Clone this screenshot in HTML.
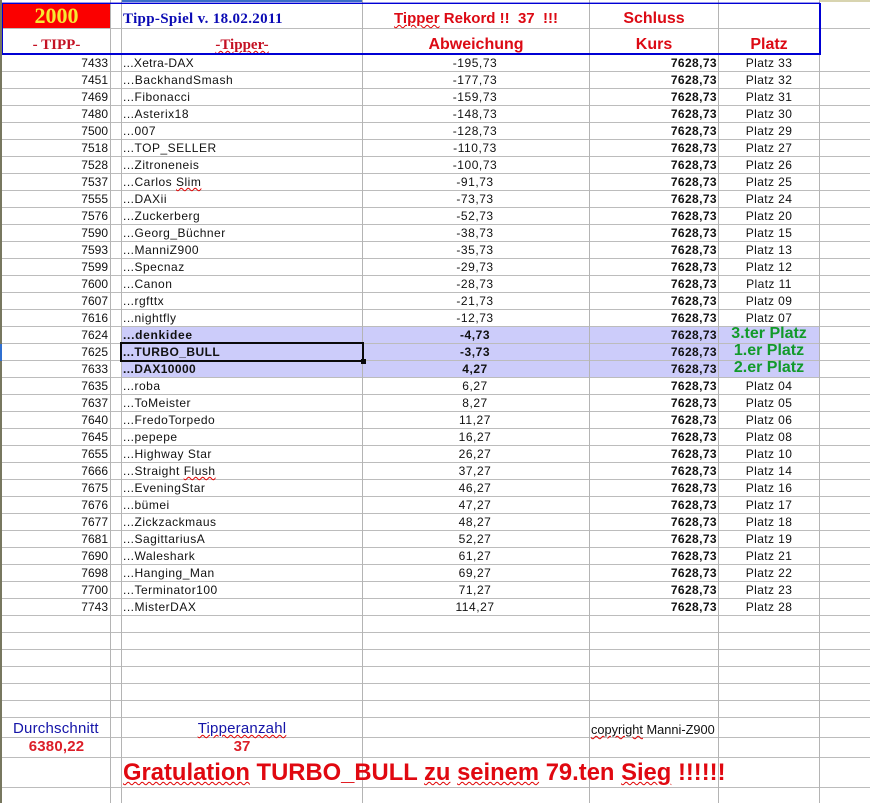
<!DOCTYPE html>
<html><head><meta charset="utf-8">
<style>
html,body{margin:0;padding:0;background:#fff}
#p{position:relative;width:870px;height:803px;overflow:hidden;background:#fff;font-family:"Liberation Sans",sans-serif;font-size:12px;color:#111}
.a{position:absolute;white-space:pre}
.h{position:absolute;left:2px;width:868px;height:1px;background:#bcbcbc}
.v{position:absolute;top:0;width:1px;height:803px;background:#b4b4b4}
.rows{position:absolute;left:0;top:55px;width:820px}
.r{position:relative;height:17px;line-height:17px}
.r span{position:absolute;top:0;white-space:pre}
.r span span{position:static}
.r .n{left:60px;width:48px;text-align:right}
.r .t{left:123px;letter-spacing:.5px}
.r .d{left:362px;width:226px;text-align:center;letter-spacing:.55px}
.r .k{left:640px;width:77px;text-align:right;font-weight:bold;letter-spacing:.4px}
.r .p{left:719px;width:100px;text-align:center;letter-spacing:.4px}
.b .t,.b .d{font-weight:bold}
.r .g{font-weight:bold;font-size:16px;color:#129a2a;top:-2px;letter-spacing:0}
.w{text-decoration:underline wavy #e00000 1px;text-underline-offset:1px}
.red{color:#dc0a14}
.ser{font-family:"Liberation Serif",serif;font-weight:bold}
.hd{font-weight:bold;color:#dc0a14;text-align:center;line-height:18px}
</style></head><body><div id="p">

<div class="a" style="left:121px;top:0;width:241px;height:2px;background:#3a6cc8"></div>
<div class="a" style="left:819px;top:0;width:51px;height:2px;background:#d8d4b0"></div>
<div class="a" style="left:0;top:0;width:2px;height:803px;background:#77775f"></div>
<div class="a" style="left:0;top:344px;width:2px;height:17px;background:#2f6fd0"></div>

<div class="a" style="left:121px;top:327px;width:698px;height:51px;background:#ccccfa"></div>

<div class="h" style="top:28px"></div>
<div class="h" style="top:71px"></div><div class="h" style="top:88px"></div><div class="h" style="top:105px"></div><div class="h" style="top:122px"></div><div class="h" style="top:139px"></div><div class="h" style="top:156px"></div><div class="h" style="top:173px"></div><div class="h" style="top:190px"></div><div class="h" style="top:207px"></div><div class="h" style="top:224px"></div><div class="h" style="top:241px"></div><div class="h" style="top:258px"></div><div class="h" style="top:275px"></div><div class="h" style="top:292px"></div><div class="h" style="top:309px"></div><div class="h" style="top:326px"></div><div class="h" style="top:343px"></div><div class="h" style="top:360px"></div><div class="h" style="top:377px"></div><div class="h" style="top:394px"></div><div class="h" style="top:411px"></div><div class="h" style="top:428px"></div><div class="h" style="top:445px"></div><div class="h" style="top:462px"></div><div class="h" style="top:479px"></div><div class="h" style="top:496px"></div><div class="h" style="top:513px"></div><div class="h" style="top:530px"></div><div class="h" style="top:547px"></div><div class="h" style="top:564px"></div><div class="h" style="top:581px"></div><div class="h" style="top:598px"></div><div class="h" style="top:615px"></div><div class="h" style="top:632px"></div><div class="h" style="top:649px"></div><div class="h" style="top:666px"></div><div class="h" style="top:683px"></div><div class="h" style="top:700px"></div><div class="h" style="top:717px"></div><div class="h" style="top:737px"></div><div class="h" style="top:757px"></div><div class="h" style="top:787px"></div>

<div class="v" style="left:110px"></div>
<div class="v" style="left:121px"></div>
<div class="v" style="left:362px"></div>
<div class="v" style="left:589px"></div>
<div class="v" style="left:718px"></div>
<div class="v" style="left:819px"></div>

<div class="a" style="left:3px;top:4px;width:107px;height:24px;background:#fb0000"></div>
<div class="a ser" style="left:3px;top:4px;width:107px;height:24px;line-height:24px;text-align:center;font-size:22px;color:#f6e832">2000</div>
<div class="a ser" style="left:123px;top:11px;line-height:17px;font-size:15px;color:#0a0ab4;letter-spacing:.33px">Tipp-Spiel v. 18.02.2011</div>
<div class="a hd" style="left:363px;top:10px;width:226px;font-size:15px"><span class="w">Tipper</span> Rekord !!  37  !!!</div>
<div class="a hd" style="left:590px;top:10px;width:128px;font-size:16px">Schluss</div>
<div class="a ser" style="left:3px;top:37px;width:107px;text-align:center;line-height:17px;font-size:15px;color:#c41224">- TIPP-</div>
<div class="a ser" style="left:122px;top:37px;width:240px;text-align:center;line-height:17px;font-size:15px;color:#c41224"><span class="w">-Tipper-</span></div>
<div class="a hd" style="left:363px;top:36px;width:226px;font-size:16px">Abweichung</div>
<div class="a hd" style="left:590px;top:36px;width:128px;font-size:16px">Kurs</div>
<div class="a hd" style="left:719px;top:36px;width:100px;font-size:16px">Platz</div>

<div class="rows">
<div class="r"><span class="n">7433</span><span class="t" style="letter-spacing:.3px">...Xetra-DAX</span><span class="d">-195,73</span><span class="k">7628,73</span><span class="p">Platz 33</span></div>
<div class="r"><span class="n">7451</span><span class="t" style="letter-spacing:.6px">...BackhandSmash</span><span class="d">-177,73</span><span class="k">7628,73</span><span class="p">Platz 32</span></div>
<div class="r"><span class="n">7469</span><span class="t">...Fibonacci</span><span class="d">-159,73</span><span class="k">7628,73</span><span class="p">Platz 31</span></div>
<div class="r"><span class="n">7480</span><span class="t">...Asterix18</span><span class="d">-148,73</span><span class="k">7628,73</span><span class="p">Platz 30</span></div>
<div class="r"><span class="n">7500</span><span class="t">...007</span><span class="d">-128,73</span><span class="k">7628,73</span><span class="p">Platz 29</span></div>
<div class="r"><span class="n">7518</span><span class="t">...TOP_SELLER</span><span class="d">-110,73</span><span class="k">7628,73</span><span class="p">Platz 27</span></div>
<div class="r"><span class="n">7528</span><span class="t">...Zitroneneis</span><span class="d">-100,73</span><span class="k">7628,73</span><span class="p">Platz 26</span></div>
<div class="r"><span class="n">7537</span><span class="t">...Carlos <span class="w">Slim</span></span><span class="d">-91,73</span><span class="k">7628,73</span><span class="p">Platz 25</span></div>
<div class="r"><span class="n">7555</span><span class="t">...DAXii</span><span class="d">-73,73</span><span class="k">7628,73</span><span class="p">Platz 24</span></div>
<div class="r"><span class="n">7576</span><span class="t">...Zuckerberg</span><span class="d">-52,73</span><span class="k">7628,73</span><span class="p">Platz 20</span></div>
<div class="r"><span class="n">7590</span><span class="t">...Georg_Büchner</span><span class="d">-38,73</span><span class="k">7628,73</span><span class="p">Platz 15</span></div>
<div class="r"><span class="n">7593</span><span class="t">...ManniZ900</span><span class="d">-35,73</span><span class="k">7628,73</span><span class="p">Platz 13</span></div>
<div class="r"><span class="n">7599</span><span class="t">...Specnaz</span><span class="d">-29,73</span><span class="k">7628,73</span><span class="p">Platz 12</span></div>
<div class="r"><span class="n">7600</span><span class="t">...Canon</span><span class="d">-28,73</span><span class="k">7628,73</span><span class="p">Platz 11</span></div>
<div class="r"><span class="n">7607</span><span class="t">...rgfttx</span><span class="d">-21,73</span><span class="k">7628,73</span><span class="p">Platz 09</span></div>
<div class="r"><span class="n">7616</span><span class="t">...nightfly</span><span class="d">-12,73</span><span class="k">7628,73</span><span class="p">Platz 07</span></div>
<div class="r b"><span class="n">7624</span><span class="t" style="letter-spacing:.7px">...denkidee</span><span class="d">-4,73</span><span class="k">7628,73</span><span class="p g">3.ter Platz</span></div>
<div class="r b"><span class="n">7625</span><span class="t" style="letter-spacing:.45px">...TURBO_BULL</span><span class="d">-3,73</span><span class="k">7628,73</span><span class="p g">1.er Platz</span></div>
<div class="r b"><span class="n">7633</span><span class="t" style="letter-spacing:.4px">...DAX10000</span><span class="d">4,27</span><span class="k">7628,73</span><span class="p g">2.er Platz</span></div>
<div class="r"><span class="n">7635</span><span class="t">...roba</span><span class="d">6,27</span><span class="k">7628,73</span><span class="p">Platz 04</span></div>
<div class="r"><span class="n">7637</span><span class="t">...ToMeister</span><span class="d">8,27</span><span class="k">7628,73</span><span class="p">Platz 05</span></div>
<div class="r"><span class="n">7640</span><span class="t">...FredoTorpedo</span><span class="d">11,27</span><span class="k">7628,73</span><span class="p">Platz 06</span></div>
<div class="r"><span class="n">7645</span><span class="t">...pepepe</span><span class="d">16,27</span><span class="k">7628,73</span><span class="p">Platz 08</span></div>
<div class="r"><span class="n">7655</span><span class="t">...Highway Star</span><span class="d">26,27</span><span class="k">7628,73</span><span class="p">Platz 10</span></div>
<div class="r"><span class="n">7666</span><span class="t">...Straight <span class="w">Flush</span></span><span class="d">37,27</span><span class="k">7628,73</span><span class="p">Platz 14</span></div>
<div class="r"><span class="n">7675</span><span class="t">...EveningStar</span><span class="d">46,27</span><span class="k">7628,73</span><span class="p">Platz 16</span></div>
<div class="r"><span class="n">7676</span><span class="t">...bümei</span><span class="d">47,27</span><span class="k">7628,73</span><span class="p">Platz 17</span></div>
<div class="r"><span class="n">7677</span><span class="t">...Zickzackmaus</span><span class="d">48,27</span><span class="k">7628,73</span><span class="p">Platz 18</span></div>
<div class="r"><span class="n">7681</span><span class="t">...SagittariusA</span><span class="d">52,27</span><span class="k">7628,73</span><span class="p">Platz 19</span></div>
<div class="r"><span class="n">7690</span><span class="t">...Waleshark</span><span class="d">61,27</span><span class="k">7628,73</span><span class="p">Platz 21</span></div>
<div class="r"><span class="n">7698</span><span class="t">...Hanging_Man</span><span class="d">69,27</span><span class="k">7628,73</span><span class="p">Platz 22</span></div>
<div class="r"><span class="n">7700</span><span class="t">...Terminator100</span><span class="d">71,27</span><span class="k">7628,73</span><span class="p">Platz 23</span></div>
<div class="r"><span class="n">7743</span><span class="t">...MisterDAX</span><span class="d">114,27</span><span class="k">7628,73</span><span class="p">Platz 28</span></div>
</div>

<div class="a" style="left:2px;top:3px;width:818px;height:1px;background:#0000d4;box-shadow:0 -1px 0 rgba(0,0,212,.4)"></div>
<div class="a" style="left:2px;top:3px;width:1px;height:52px;background:#0000d4"></div>
<div class="a" style="left:819px;top:3px;width:2px;height:52px;background:#0000d4"></div>
<div class="a" style="left:2px;top:53px;width:819px;height:2px;background:#0000d4"></div>

<div class="a" style="left:120px;top:342px;width:240px;height:16px;border:2px solid #0a0a0a"></div>
<div class="a" style="left:361px;top:359px;width:5px;height:5px;background:#0a0a0a"></div>

<div class="a" style="left:13px;top:720px;width:85px;text-align:center;line-height:17px;font-size:15px;letter-spacing:.2px;color:#1414a8">Durchschnitt</div>
<div class="a" style="left:3px;top:738px;width:107px;text-align:center;line-height:17px;font-size:15px;font-weight:bold;letter-spacing:.2px;color:#dc1e28">6380,22</div>
<div class="a" style="left:122px;top:720px;width:240px;text-align:center;line-height:17px;font-size:15px;letter-spacing:.2px;color:#1414a8"><span class="w">Tipperanzahl</span></div>
<div class="a" style="left:122px;top:738px;width:240px;text-align:center;line-height:17px;font-size:15px;font-weight:bold;color:#dc1e28">37</div>
<div class="a" style="left:591px;top:722px;line-height:15px;font-size:12.8px;color:#111"><span class="w">copyright</span> Manni-Z900</div>
<div class="a" style="left:123px;top:759px;line-height:28px;font-size:23.8px;font-weight:bold;color:#e00810"><span class="w">Gratulation</span> TURBO_BULL <span class="w">zu</span> <span class="w">seinem</span> 79.ten <span class="w">Sieg</span> !!!!!!</div>

</div></body></html>
